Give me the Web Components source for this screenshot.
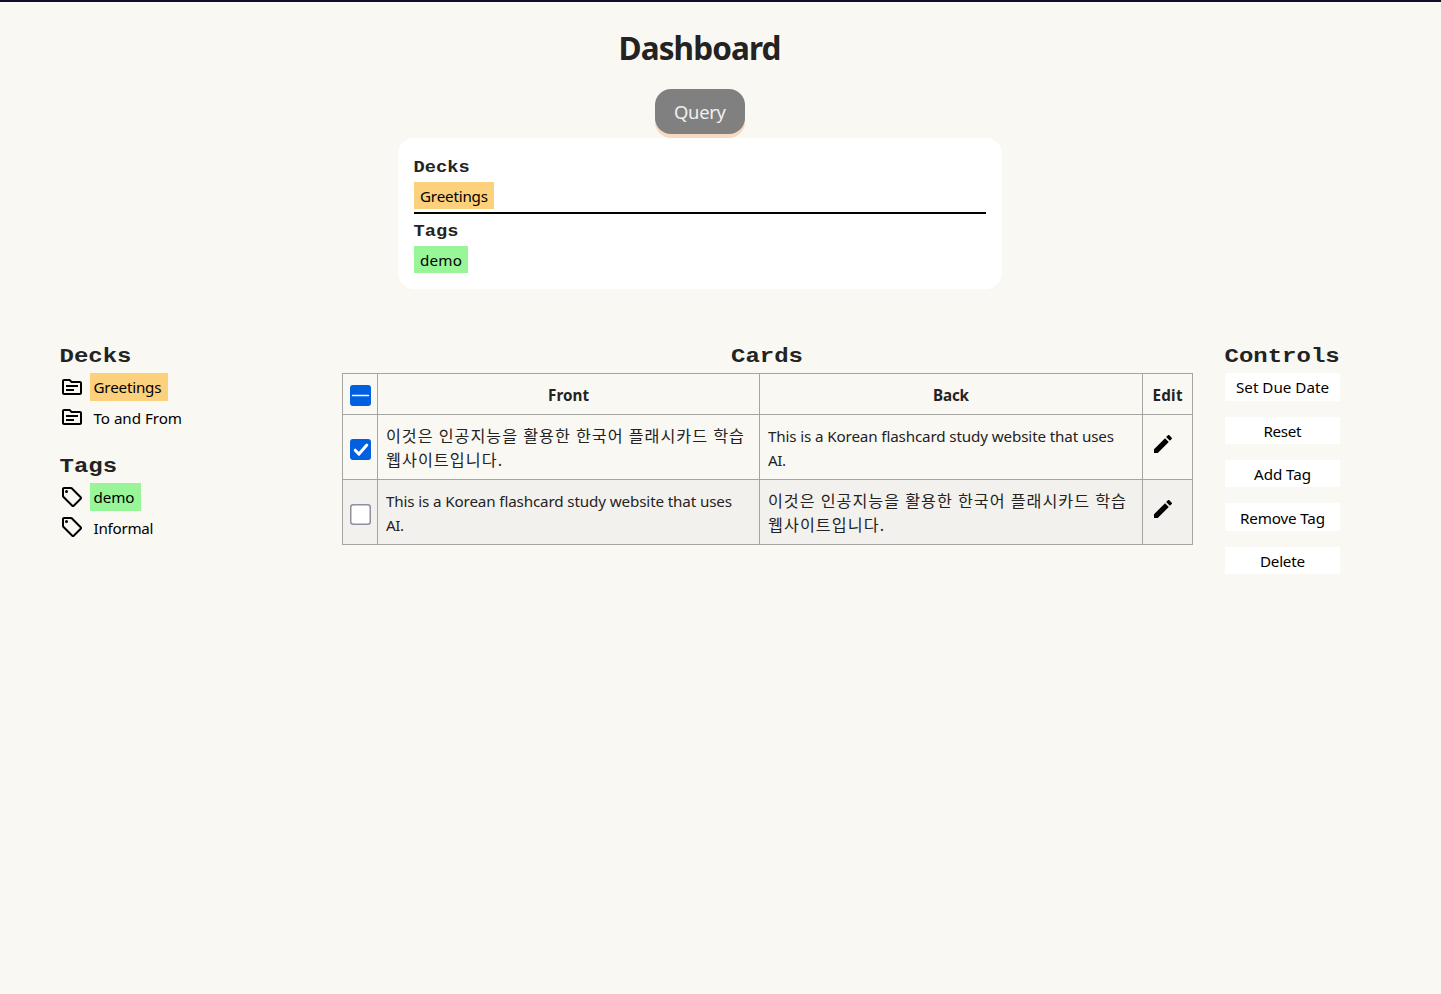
<!DOCTYPE html>
<html lang="en"><head><meta charset="utf-8"><title>Dashboard</title>
<style>
html,body{margin:0;height:100%}
body{background:#faf8f3;color:#232323;font:15.2px/24px "Noto Sans","Noto Sans CJK KR",sans-serif}
</style></head><body>
<app-page></app-page>
<script>
const make=(name,html,setup)=>customElements.define(name,class extends HTMLElement{
  connectedCallback(){
    if(this.shadowRoot)return;
    const t=document.createElement('template');t.innerHTML=html;
    this.attachShadow({mode:'open'}).append(t.content.cloneNode(true));
    if(setup)setup(this,this.shadowRoot);
  }
});
// One line of text, tracked so that it takes up the width in its "w" attribute.
make('text-line',`<style>:host{display:inline-block;white-space:nowrap}span{display:inline-block}:host([lang=ko]){font-size:16.2px;line-height:25px;height:24px;vertical-align:top}</style><span><slot></slot></span>`,(el,root)=>{
  const w=+el.getAttribute('w');if(!w)return;
  const s=root.querySelector('span'),n=el.textContent.length;
  const ls=(w-s.getBoundingClientRect().width)/(n-1);
  s.style.letterSpacing=ls+'px';s.style.marginRight=-ls+'px';
});
make('mono-title',`<style>:host{display:block;font:bold 24px/27px "Liberation Mono",monospace;color:#232323;white-space:nowrap}
:host([small]){font-size:18.72px;line-height:21px}div{transform:translate(-.5px,.6px) scaleY(.88);transform-origin:50% 72%}:host([small]) div{transform:translate(-.5px,.4px) scaleY(.88)}</style><div><slot></slot></div>`);
make('tag-chip',`<style>:host{display:block;width:max-content;height:27px;line-height:28px;padding:0 6px;color:#000}
:host([color=deck]){background:#fdd07c}:host([color=tag]){background:#98f598}
:host([list]){padding:0 6.500px 0 3.500px;height:28px}</style><slot></slot>`);
make('query-button',`<style>:host{display:block;width:90px;height:45px}
button{all:unset;box-sizing:border-box;width:90px;height:45px;border-radius:16px;background:#808080;color:#f0f0f0;box-shadow:0 4px #f7dac3;font-size:18.4px;line-height:46px;text-align:center;display:block}</style><button><slot></slot></button>`);
make('query-panel',`<style>:host{display:block;box-sizing:border-box;width:604px;height:151px;margin-top:4px;padding:19px 16px 0;background:#fff;border-radius:16px}
.a{padding-bottom:3px;border-bottom:2px solid #000;margin-bottom:7px}tag-chip{margin-top:4px}</style>
<div class="a"><mono-title small>Decks</mono-title><tag-chip color="deck"><text-line w="68">Greetings</text-line></tag-chip></div>
<mono-title small>Tags</mono-title><tag-chip color="tag"><text-line w="42">demo</text-line></tag-chip>`);
const paths={
 folder:'M20 6h-8l-2-2H4c-1.1 0-1.99.9-1.99 2L2 18c0 1.1.9 2 2 2h16c1.1 0 2-.9 2-2V8c0-1.1-.9-2-2-2zm0 12H4V6h5.17l2 2H20v10zm-2-6H6v-2h12v2zm-4 4H6v-2h8v2z',
 tag:'M21.41 11.58l-9-9C12.05 2.22 11.55 2 11 2H4c-1.1 0-2 .9-2 2v7c0 .55.22 1.05.59 1.42l9 9c.36.36.86.58 1.41.58s1.05-.22 1.41-.59l7-7c.37-.36.59-.86.59-1.41s-.23-1.06-.59-1.42zM13 20.01L4 11V4h7v-.01l9 9-7 7.02zM8 6.500a1.500 1.500 0 1 1-3 0a1.500 1.500 0 1 1 3 0z',
 pencil:'M20.71 7.04c.39-.39.39-1.04 0-1.410l-2.340-2.340c-.37-.39-1.020-.39-1.410 0l-1.840 1.830 3.750 3.750M3 17.250V21h3.750L17.810 9.930l-3.750-3.750L3 17.250z'};
make('ui-icon',`<style>:host{display:block;width:24px;height:24px}svg{display:block}</style><svg width="24" height="24" viewBox="0 0 24 24"><path fill="#000"/></svg>`,
 (el,r)=>r.querySelector('path').setAttribute('d',paths[el.getAttribute('name')]));
make('list-row',`<style>:host{display:flex;height:28px;margin-bottom:3px;gap:6px;align-items:flex-start}:host(:last-child){margin-bottom:0}</style><ui-icon></ui-icon><slot></slot>`,
 (el,r)=>{const i=r.querySelector('ui-icon'),n=document.createElement('ui-icon');n.setAttribute('name',el.getAttribute('icon'));n.style.marginTop=(el.getAttribute('top')||2)+'px';i.replaceWith(n);});
make('side-list',`<style>:host{display:block}</style>
<mono-title>Decks</mono-title><div style="height:5px"></div>
<div><list-row icon="folder"><tag-chip list color="deck"><text-line w="68">Greetings</text-line></tag-chip></list-row>
<list-row icon="folder" top="1"><tag-chip list><text-line w="88.500">To and From</text-line></tag-chip></list-row></div>
<mono-title style="margin-top:19px">Tags</mono-title><div style="height:5px"></div>
<div><list-row icon="tag"><tag-chip list color="tag"><text-line w="41">demo</text-line></tag-chip></list-row>
<list-row icon="tag" top="1"><tag-chip list><text-line w="60">Informal</text-line></tag-chip></list-row></div>`);
make('check-box',`<style>:host{display:block;width:21px;height:21px}svg{display:none}:host([state=on]) .on,:host([state=mixed]) .mixed,:host([state=off]) .off{display:block}</style>
<svg class="on" width="21" height="21"><rect width="21" height="21" rx="3" fill="#0060df"/><path d="M5.200 11.200l3.800 3.900 7.800-9" fill="none" stroke="#fff" stroke-width="3" stroke-linecap="round" stroke-linejoin="round"/></svg>
<svg class="mixed" width="21" height="21"><rect width="21" height="21" rx="3" fill="#0060df"/><path d="M2.500 10.500h16" stroke="#fff" stroke-width="1.500" stroke-linecap="round"/></svg>
<svg class="off" width="21" height="21"><rect x=".75" y=".75" width="19.500" height="19.500" rx="2.500" fill="#fff" stroke="#8f8f9d" stroke-width="1.500"/></svg>`);
const ko='<text-line lang="ko" w="358">이것은 인공지능을 활용한 한국어 플래시카드 학습</text-line><br><text-line lang="ko" w="116">웹사이트입니다.</text-line>';
const en='<text-line w="346">This is a Korean flashcard study website that uses</text-line><br><text-line w="18">AI.</text-line>';
make('cards-table',`<style>:host{display:grid;grid-template-columns:35px 382px 383px 50px;grid-template-rows:41px 65px 65px;border:solid #a4a4a1;border-width:0 1px 1px 0;width:850px}
div{border:solid #a4a4a1;border-width:1px 0 0 1px;box-sizing:border-box;padding:9px 8px 0;min-width:0;overflow:hidden}
.h{font-weight:bold;text-align:center;padding:9px 0 0}.c{padding:11px 0 0 7px}.c.r{padding-top:24px}.s{background:#f3f1ed}.p{padding:17px 0 0 8px}</style>
<div class="c"><check-box state="mixed"></check-box></div><div class="h"><text-line w="41">Front</text-line></div><div class="h"><text-line w="36">Back</text-line></div><div class="h"><text-line w="30">Edit</text-line></div>
<div class="c r"><check-box state="on"></check-box></div><div>${ko}</div><div>${en}</div><div class="p"><ui-icon name="pencil"></ui-icon></div>
<div class="c r s"><check-box state="off"></check-box></div><div class="s">${en}</div><div class="s">${ko}</div><div class="p s"><ui-icon name="pencil"></ui-icon></div>`);
make('control-button',`<style>:host{display:block}button{all:unset;display:block;width:115px;height:27px;line-height:28px;background:#fff;color:#000;text-align:center}:host([tall]) button{height:28px}:host([low]) button{line-height:30px}</style><button><slot></slot></button>`);
make('control-list',`<style>:host{display:block}nav{display:flex;flex-direction:column;gap:16px;margin-top:5px}control-button:first-child{margin-bottom:0}</style><mono-title>Controls</mono-title><nav>
<control-button tall><text-line w="93">Set Due Date</text-line></control-button><control-button><text-line w="38">Reset</text-line></control-button><control-button><text-line w="57">Add Tag</text-line></control-button><control-button tall low><text-line w="85">Remove Tag</text-line></control-button><control-button><text-line w="45">Delete</text-line></control-button></nav>`);
make('app-page',`<style>:host{display:block;box-sizing:border-box;height:994px;border-top:2px solid #110e2b;overflow:hidden}
header{width:1400px;display:flex;flex-direction:column;align-items:center}
h1{margin:23px 0 18px;font-size:31.500px;line-height:46px}
main{display:grid;grid-template-columns:282px 851px 115px;column-gap:0;padding:52px 0 0 60px}
control-list{margin-left:32px}.cards mono-title{text-align:center;margin-bottom:5px}</style>
<header><h1><text-line w="163">Dashboard</text-line></h1><query-button><text-line w="52">Query</text-line></query-button><query-panel></query-panel></header>
<main><side-list></side-list><section class="cards"><mono-title>Cards</mono-title><cards-table></cards-table></section><control-list></control-list></main>`);
</script></body></html>
